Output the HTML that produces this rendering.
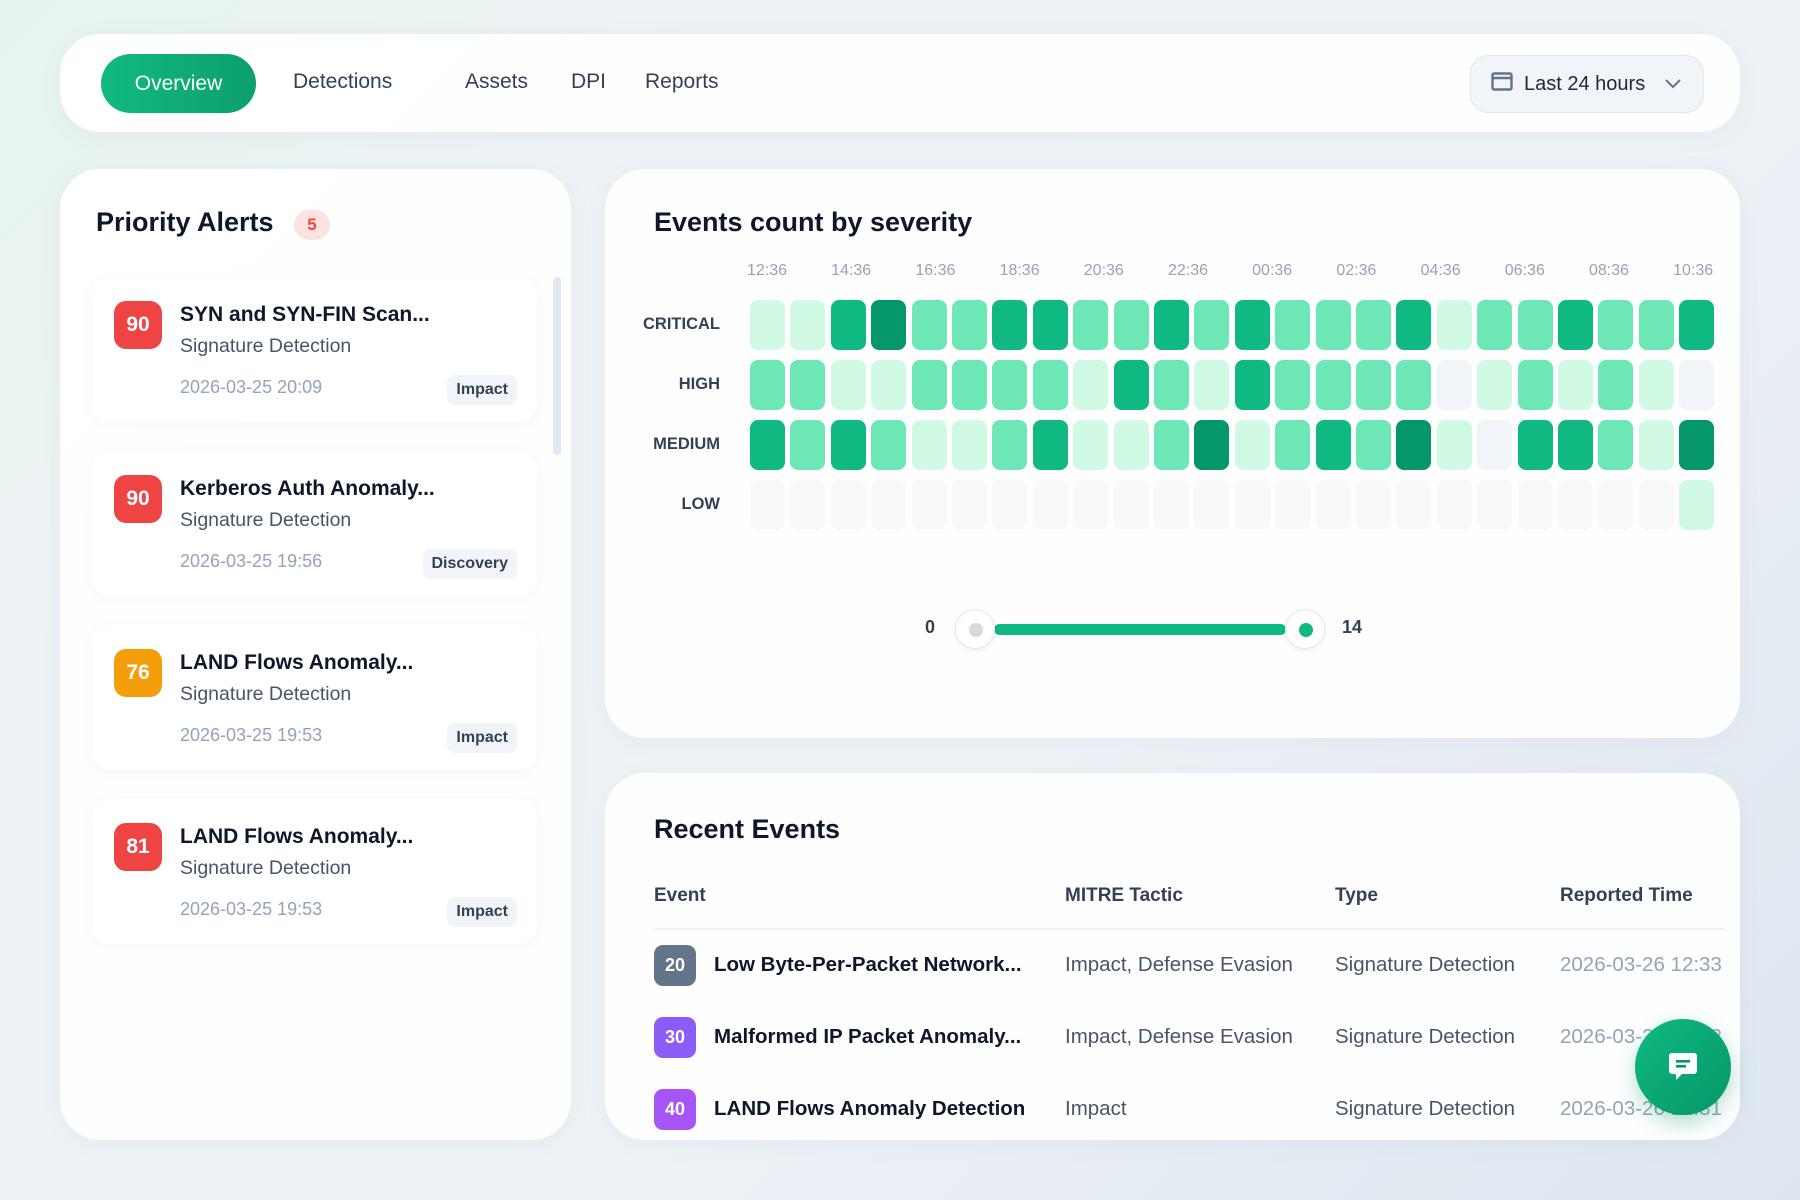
<!DOCTYPE html>
<html><head><meta charset="utf-8"><style>
*{box-sizing:border-box;margin:0;padding:0}
body{width:1800px;height:1200px;overflow:hidden;font-family:"Liberation Sans",sans-serif;background:linear-gradient(135deg,#e6f4ee 0%,#eef2f6 25%,#eef2f7 60%,#dde6f0 100%);position:relative;color:#0f172a}
.card{position:absolute;background:rgba(255,255,255,0.93);border-radius:40px;box-shadow:0 4px 24px rgba(100,116,139,0.06)}
.nav{left:60px;top:34px;width:1680px;height:98px}
.pill{position:absolute;left:41px;top:20px;width:155px;height:59px;border-radius:30px;background:linear-gradient(90deg,#10b981,#0e9f6e);color:#fff;font-size:21px;text-align:center;line-height:59px}
.nl{position:absolute;top:36px;font-size:21px;color:#334155}
.dd{position:absolute;left:1410px;top:21px;width:234px;height:58px;border-radius:18px;background:#f1f4f8;border:1px solid #e2e8f0;font-size:20px;color:#1e293b}
h2{position:absolute;font-size:27px;font-weight:bold;color:#0f172a}
.alert{position:absolute;left:32px;width:445px;height:145px;background:#fff;border-radius:18px;box-shadow:0 2px 12px rgba(100,116,139,0.05)}
.sc{position:absolute;left:22px;top:24px;width:48px;height:48px;border-radius:12px;color:#fff;font-weight:bold;font-size:21px;text-align:center;line-height:48px}
.at{position:absolute;left:88px;top:26px;font-size:21px;font-weight:bold;color:#0f172a}
.as{position:absolute;left:88px;top:58px;font-size:19.5px;color:#475569}
.ad{position:absolute;left:88px;top:100px;font-size:18px;color:#94a3b8}
.tag{position:absolute;right:20px;top:98px;height:30px;padding:0 9px;border-radius:8px;background:#f1f4f8;font-size:16px;font-weight:bold;color:#334155;line-height:30px}
.cell{position:absolute;width:35px;height:50px;border-radius:8px}
.l0{background:#f1f4f8}.l1{background:#d1fae5}.l2{background:#6ee7b7}.l3{background:#10b981}.l4{background:#059669}.le{background:#f7f9fb}
.rl{position:absolute;right:1080px;font-size:16.5px;font-weight:bold;color:#334155;width:100px;text-align:right}
.tl{position:absolute;top:262px;font-size:16px;color:#94a3b8;width:60px;text-align:center}
.th{position:absolute;top:885px;font-size:19px;font-weight:bold;color:#334155}
.ev{position:absolute;font-size:20.5px}
.eb{position:absolute;left:654px;width:42px;height:41px;border-radius:9px;color:#fff;font-weight:bold;font-size:18px;text-align:center;line-height:41px}
</style></head><body>
<div class="card nav">
<div class="pill">Overview</div>
<div class="nl" style="left:233px">Detections</div>
<div class="nl" style="left:405px">Assets</div>
<div class="nl" style="left:511px">DPI</div>
<div class="nl" style="left:585px">Reports</div>
<div class="dd">
<svg style="position:absolute;left:20px;top:16px" width="22" height="20" viewBox="0 0 22 20"><rect x="1.5" y="1.5" width="19" height="16" rx="1.5" fill="none" stroke="#64748b" stroke-width="2.4"/><line x1="1.5" y1="6" x2="20.5" y2="6" stroke="#64748b" stroke-width="2.4"/></svg>
<span style="position:absolute;left:53px;top:17px">Last 24 hours</span>
<svg style="position:absolute;left:193px;top:22px" width="18" height="12" viewBox="0 0 18 12"><path d="M2 2 L9 9 L16 2" fill="none" stroke="#64748b" stroke-width="2"/></svg>
</div>
</div>

<div class="card" style="left:60px;top:169px;width:511px;height:971px">
<h2 style="left:36px;top:38px">Priority Alerts</h2>
<div style="position:absolute;left:234px;top:41px;width:36px;height:30px;border-radius:15px;background:#fde2e2;color:#ef4444;font-weight:bold;font-size:17px;text-align:center;line-height:30px">5</div>
<div style="position:absolute;left:493px;top:108px;width:8px;height:178px;border-radius:4px;background:#e2e8f0"></div>
<div class="alert" style="top:108px"><div class="sc" style="background:#ef4444">90</div><div class="at">SYN and SYN-FIN Scan...</div><div class="as">Signature Detection</div><div class="ad">2026-03-25 20:09</div><div class="tag">Impact</div></div>
<div class="alert" style="top:282px"><div class="sc" style="background:#ef4444">90</div><div class="at">Kerberos Auth Anomaly...</div><div class="as">Signature Detection</div><div class="ad">2026-03-25 19:56</div><div class="tag">Discovery</div></div>
<div class="alert" style="top:456px"><div class="sc" style="background:#f59e0b">76</div><div class="at">LAND Flows Anomaly...</div><div class="as">Signature Detection</div><div class="ad">2026-03-25 19:53</div><div class="tag">Impact</div></div>
<div class="alert" style="top:630px"><div class="sc" style="background:#ef4444">81</div><div class="at">LAND Flows Anomaly...</div><div class="as">Signature Detection</div><div class="ad">2026-03-25 19:53</div><div class="tag">Impact</div></div>
</div>

<div class="card" style="left:605px;top:169px;width:1135px;height:569px"></div>
<h2 style="left:654px;top:207px">Events count by severity</h2>
<div id="grid"></div>
<div style="position:absolute;left:925px;top:617px;font-size:18px;font-weight:bold;color:#334155">0</div>
<div style="position:absolute;left:994px;top:624px;width:292px;height:11px;border-radius:6px;background:#10b981"></div>
<div style="position:absolute;left:955px;top:609px;width:40px;height:40px;border-radius:50%;background:#fff;border:1px solid #e2e8f0;box-shadow:0 2px 6px rgba(0,0,0,.06)"><div style="margin:13px;width:14px;height:14px;border-radius:50%;background:#d4d9e0"></div></div>
<div style="position:absolute;left:1285px;top:609px;width:40px;height:40px;border-radius:50%;background:#fff;border:1px solid #e2e8f0;box-shadow:0 2px 6px rgba(0,0,0,.06)"><div style="margin:13px;width:14px;height:14px;border-radius:50%;background:#10b981"></div></div>
<div style="position:absolute;left:1342px;top:617px;font-size:18px;font-weight:bold;color:#334155">14</div>

<div class="card" style="left:605px;top:773px;width:1135px;height:367px"></div>
<h2 style="left:654px;top:814px">Recent Events</h2>
<div class="th" style="left:654px">Event</div>
<div class="th" style="left:1065px">MITRE Tactic</div>
<div class="th" style="left:1335px">Type</div>
<div class="th" style="left:1560px">Reported Time</div>
<div style="position:absolute;left:654px;top:928px;width:1070px;height:2px;background:#eef1f5"></div>

<div class="eb" style="top:945px;background:#64748b">20</div>
<div class="ev" style="left:714px;top:953px;font-weight:bold">Low Byte-Per-Packet Network...</div>
<div class="ev" style="left:1065px;top:953px;color:#475569">Impact, Defense Evasion</div>
<div class="ev" style="left:1335px;top:953px;color:#475569">Signature Detection</div>
<div class="ev" style="left:1560px;top:953px;color:#94a3b8">2026-03-26 12:33</div>

<div class="eb" style="top:1017px;background:#8b5cf6">30</div>
<div class="ev" style="left:714px;top:1025px;font-weight:bold">Malformed IP Packet Anomaly...</div>
<div class="ev" style="left:1065px;top:1025px;color:#475569">Impact, Defense Evasion</div>
<div class="ev" style="left:1335px;top:1025px;color:#475569">Signature Detection</div>
<div class="ev" style="left:1560px;top:1025px;color:#94a3b8">2026-03-26 12:32</div>

<div class="eb" style="top:1089px;background:#a855f7">40</div>
<div class="ev" style="left:714px;top:1097px;font-weight:bold">LAND Flows Anomaly Detection</div>
<div class="ev" style="left:1065px;top:1097px;color:#475569">Impact</div>
<div class="ev" style="left:1335px;top:1097px;color:#475569">Signature Detection</div>
<div class="ev" style="left:1560px;top:1097px;color:#94a3b8">2026-03-26 12:31</div>

<div style="position:absolute;left:1635px;top:1019px;width:96px;height:96px;border-radius:50%;background:linear-gradient(135deg,#10b981,#059669);box-shadow:0 8px 20px rgba(5,150,105,.3)">
<svg style="position:absolute;left:33px;top:32px" width="30" height="32" viewBox="0 0 30 32"><path d="M4 2 H26 A3 3 0 0 1 29 5 V20 A3 3 0 0 1 26 23 H14 L8 29 V23 H4 A3 3 0 0 1 1 20 V5 A3 3 0 0 1 4 2 Z" fill="#fff"/><rect x="8" y="9" width="14" height="2.6" fill="#059669"/><rect x="8" y="14" width="10" height="2.6" fill="#059669"/></svg>
</div>

<script>
var d=[[1,1,3,4,2,2,3,3,2,2,3,2,3,2,2,2,3,1,2,2,3,2,2,3],
[2,2,1,1,2,2,2,2,1,3,2,1,3,2,2,2,2,0,1,2,1,2,1,0],
[3,2,3,2,1,1,2,3,1,1,2,4,1,2,3,2,4,1,0,3,3,2,1,4],
['e','e','e','e','e','e','e','e','e','e','e','e','e','e','e','e','e','e','e','e','e','e','e',1]];
var names=['CRITICAL','HIGH','MEDIUM','LOW'];var tops=[300,360,420,480];
var h='';
for(var r=0;r<4;r++){h+='<div class="rl" style="left:620px;top:'+(tops[r]+15)+'px">'+names[r]+'</div>';
for(var c=0;c<24;c++){h+='<div class="cell l'+d[r][c]+'" style="left:'+(750+c*40.4)+'px;top:'+tops[r]+'px"></div>';}}
var t=['12:36','14:36','16:36','18:36','20:36','22:36','00:36','02:36','04:36','06:36','08:36','10:36'];
for(var i=0;i<12;i++){h+='<div class="tl" style="left:'+(737+i*84.2)+'px">'+t[i]+'</div>';}
document.getElementById('grid').innerHTML=h;
</script>
</body></html>
